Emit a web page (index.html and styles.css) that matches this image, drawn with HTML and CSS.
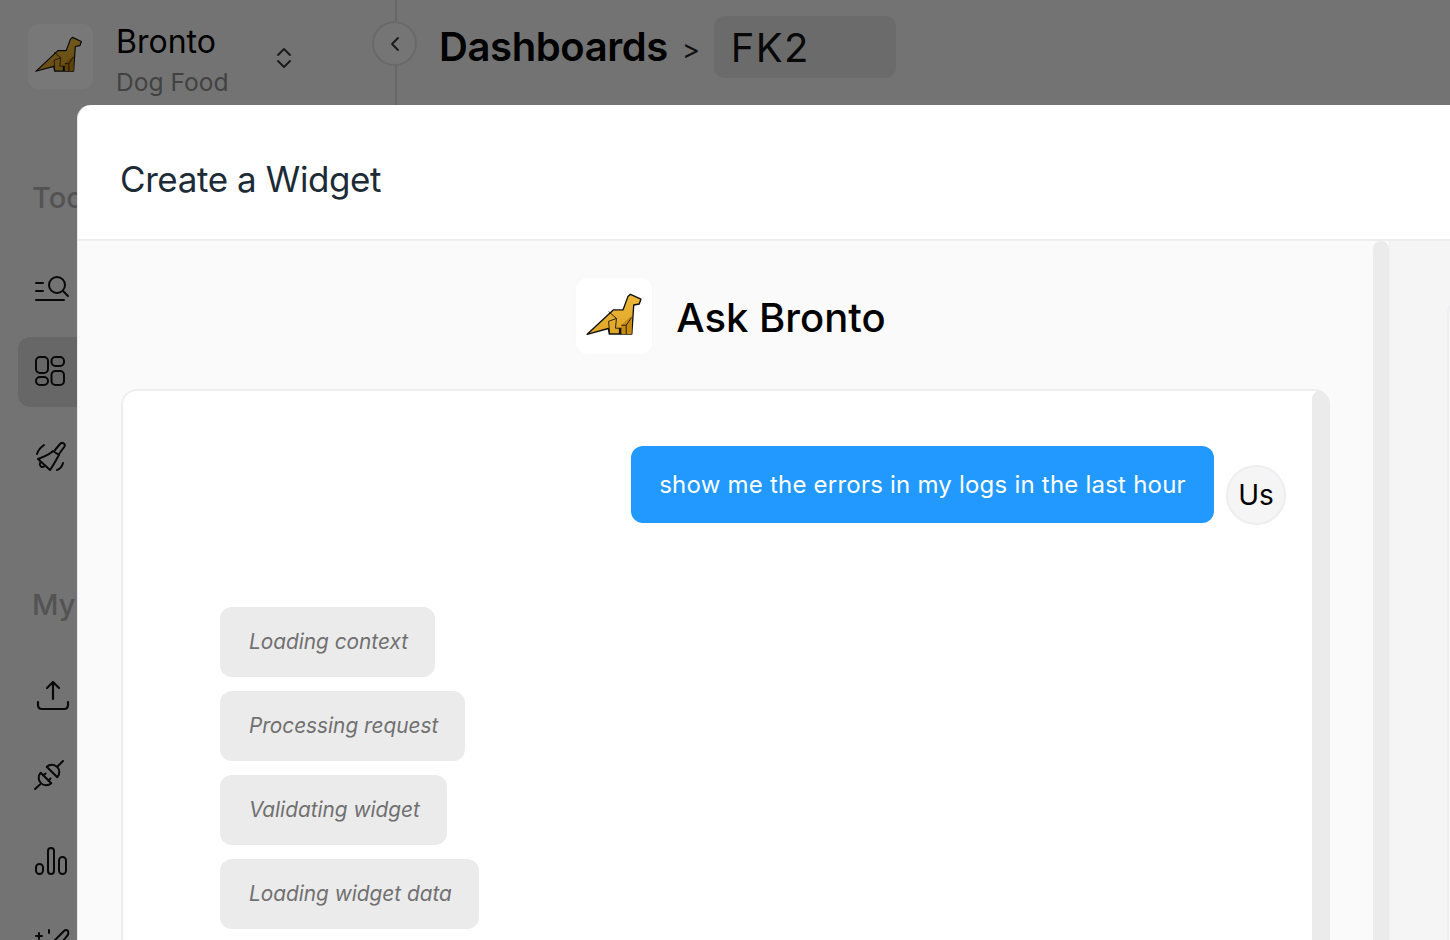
FILE: index.html
```html
<!DOCTYPE html>
<html lang="en">
<head>
<meta charset="utf-8">
<title>Create a Widget</title>
<link rel="stylesheet" href="styles.css">
</head>
<body>
<svg class="defs" width="0" height="0" aria-hidden="true">
  <defs>
    <linearGradient id="dino-fill" x1="0" y1="0" x2="0" y2="1">
      <stop offset="0" stop-color="#edb93a"/>
      <stop offset="1" stop-color="#dfa528"/>
    </linearGradient>
  </defs>
  <symbol id="dino" viewBox="24 27 58 44">
    <path fill="url(#dino-fill)" stroke="#111" stroke-width="1.400" stroke-linejoin="round" d="M25 69.300 L51.700 44.300 H61.700 L66.700 30.700 L69.300 28.300 L80 33.300 L78.300 38.300 L72.700 39.300 L70.700 69 H47.700 L46.700 63.300 Z"/>
    <path fill="#c98a10" d="M60 69 V60 L70.500 50 V69 Z"/>
    <path fill="#111" d="M57.500 63 H60 V69 H57.500 Z"/>
    <path fill="none" stroke="#111" stroke-width=".9" stroke-linejoin="round" d="M47 46 L55 53 L47 56 L48 69 M55 53 L54 63 H60 M65 60 V69 M60 60 L65 60 L70.500 52"/>
  </symbol>
</svg>
<div class="app">
  <aside class="sidebar">
    <div class="brand">
      <div class="brand-logo"><svg class="brand-dino"><use href="#dino"/></svg></div>
      <div class="brand-text">
        <div class="brand-name">Bronto</div>
        <div class="brand-sub">Dog Food</div>
      </div>
      <svg class="chevrons" viewBox="0 0 16 24" fill="none" stroke="#3a3a3a" stroke-width="2" stroke-linecap="round" stroke-linejoin="round"><path d="M2 9 L8 3 L14 9"/><path d="M2 15 L8 21 L14 15"/></svg>
    </div>
    <div class="nav-title nav-title-tools">Tools</div>
    <nav class="nav-list">
      <div class="nav-item"><svg class="icon" viewBox="0 0 34 32" fill="none" stroke="#111" stroke-width="2" stroke-linecap="round"><path d="M1 11 H8 M1 19 H8 M1 28 H29"/><circle cx="22" cy="13" r="8"/><path d="M28 19 L33 24"/></svg></div>
      <div class="nav-item nav-item-active"><svg class="icon" viewBox="0 0 34 32" fill="none" stroke="#111" stroke-width="2"><rect x="1" y="1" width="12" height="16" rx="4"/><rect x="16.500" y="1" width="12.500" height="9" rx="4"/><rect x="1" y="21" width="12" height="8" rx="4"/><rect x="16.500" y="15" width="12.500" height="14" rx="4"/></svg></div>
      <div class="nav-item"><svg class="icon" viewBox="0 0 34 32" fill="none" stroke="#111" stroke-width="2" stroke-linecap="round" stroke-linejoin="round"><path d="M20 10 L25 4 C27 1.500 31 4 29.500 6.500 L24 14"/><path d="M18 11 C14 15 8 17 3 19 L15 30 C18 26 21 20 24 15 Z"/><path d="M5 23 C4 26 7 28 9 26.500"/><path d="M2 14 C3 10 5 8 9 5 M22 30 C25 29 27 27 28 23"/></svg></div>
    </nav>
    <div class="nav-title nav-title-my">My Data</div>
    <nav class="nav-list nav-list-my">
      <div class="nav-item"><svg class="icon" viewBox="0 0 34 32" fill="none" stroke="#111" stroke-width="2.200" stroke-linecap="round" stroke-linejoin="round"><path d="M18 21 V4 M12 10 L18 4 L24 10"/><path d="M3 24 V27 Q3 31 7 31 H29 Q33 31 33 27 V24"/></svg></div>
      <div class="nav-item"><svg class="icon" viewBox="0 0 34 32" fill="none" stroke="#111" stroke-width="2" stroke-linecap="round" stroke-linejoin="round"><path d="M5.700 10.700 A7.500 7.500 0 0 0 16.300 21.300 Z"/><path d="M11.700 4.700 A7.500 7.500 0 0 1 22.300 15.300 Z"/><path d="M0 27 L5 22.500 M28 -1 L22.500 4.500 M8.500 13.500 L10.500 11.500 M13.500 18.500 L15.500 16.500"/></svg></div>
      <div class="nav-item"><svg class="icon" viewBox="0 0 34 32" fill="none" stroke="#111" stroke-width="2"><rect x="1" y="18" width="7" height="10" rx="3.500"/><rect x="13" y="2" width="6" height="26" rx="3"/><rect x="24" y="11" width="7" height="17" rx="3.500"/></svg></div>
      <div class="nav-item"><svg class="icon" viewBox="0 0 34 32" fill="none" stroke="#111" stroke-width="2" stroke-linecap="round"><path d="M19 11 L29 1 Q31 -1 33 1 Q34 4 32 6 L23 17"/><path d="M1 6 H7 M4 3 V9 M14 0 V3"/></svg></div>
    </nav>
  </aside>
  <main class="main">
    <header class="topbar">
      <h1 class="crumb">Dashboards</h1>
      <span class="crumb-sep">&gt;</span>
      <div class="crumb-name">FK2</div>
    </header>
  </main>
</div>
<div class="collapse-btn"><svg viewBox="0 0 12 16" fill="none" stroke="#333" stroke-width="1.800" stroke-linecap="round" stroke-linejoin="round"><path d="M9 2 L3 8 L9 14"/></svg></div>
<div class="backdrop"></div>
<section class="modal">
  <header class="modal-head"><h2 class="modal-title">Create a Widget</h2></header>
  <div class="modal-body">
    <div class="left-panel">
      <div class="left-content">
        <div class="ask-head">
          <div class="ask-logo"><svg class="ask-dino"><use href="#dino"/></svg></div>
          <div class="ask-title">Ask Bronto</div>
        </div>
        <div class="chat-card">
          <div class="messages">
            <div class="user-row">
              <div class="bubble">show me the errors in my logs in the last hour</div>
              <div class="avatar">Us</div>
            </div>
            <div class="chips">
              <div class="chip">Loading context</div>
              <div class="chip">Processing request</div>
              <div class="chip">Validating widget</div>
              <div class="chip">Loading widget data</div>
            </div>
          </div>
          <div class="track track-chat"></div>
        </div>
      </div>
      <div class="track track-panel"></div>
    </div>
    <div class="right-panel"><div class="preview-card"></div></div>
  </div>
</section>
</body>
</html>
```
FILE: styles.css
```css
* { box-sizing: border-box; }
html, body { margin: 0; height: 100%; overflow: hidden; }
body { font-family: Inter, "Liberation Sans", sans-serif; background: #f5f5f5; color: #000; }
.defs { position: absolute; }

.app { display: flex; height: 940px; }
.sidebar { width: 397px; flex: none; border-right: 2px solid #d9d9d9; padding: 24px 0 0 18px; }
.brand { display: flex; align-items: flex-start; margin-left: 10px; height: 81px; }
.brand-logo { width: 65px; height: 65px; background: #fff; border-radius: 10px; display: flex; align-items: center; justify-content: center; }
.brand-dino { width: 48px; height: 37px; margin: -4px 4px 0 0; }
.brand-text { margin-left: 23px; width: 150px; }
.brand-name { font-size: 32px; line-height: 34px; margin-top: 1px; }
.brand-sub { font-size: 24.600px; line-height: 30px; color: #8c8c8c; margin-top: 8px; }
.chevrons { width: 16px; height: 24px; margin: 22px 0 0 10px; }

.nav-title { font-size: 29px; font-weight: 500; color: #b0b0b0; line-height: 36px; margin-left: 14px; }
.nav-title-tools { margin-top: 75px; }
.nav-title-my { margin-top: 96px; }
.nav-list { display: flex; flex-direction: column; gap: 14px; margin-top: 37px; }
.nav-list-my { margin-top: 36px; }
.nav-item { height: 70px; padding-left: 17px; border-radius: 12px; display: flex; align-items: center; }
.nav-item-active { background: #dcdcdc; }
.icon { width: 34px; height: 32px; overflow: visible; }

.main { flex: 1; min-width: 0; }
.topbar { display: flex; align-items: center; height: 94px; padding-left: 42px; }
.crumb { font-size: 40px; font-weight: 600; margin: 0; line-height: 48px; letter-spacing: -.4px; }
.crumb-sep { font-size: 27px; margin: 4px 14px 0 14px; color: #222; }
.crumb-name { width: 182px; height: 62px; background: #e4e4e4; border-radius: 10px; font-size: 40px; line-height: 64px; padding-left: 17px; color: #111; letter-spacing: 1.300px; }

.collapse-btn { position: absolute; left: 372px; top: 21px; width: 45px; height: 45px; border-radius: 50%; background: #f8f8f8; border: 2px solid #e0e0e0; display: flex; align-items: center; justify-content: center; }
.collapse-btn svg { width: 12px; height: 16px; }

.backdrop { position: fixed; inset: 0; background: rgba(0,0,0,.53); }

.modal { position: fixed; left: 77px; top: 105px; right: -20px; bottom: -40px; background: #fff; border-radius: 14px 0 0 0; border-left: 1px solid #e8e8ec; display: flex; flex-direction: column; overflow: hidden; }
.modal-head { height: 136px; flex: none; border-bottom: 2px solid #eeeef1; display: flex; align-items: center; padding-left: 42px; }
.modal-title { margin: 0; font-size: 35px; font-weight: 400; color: #1c2b36; letter-spacing: -.4px; position: relative; top: 7px; }
.modal-body { flex: 1; display: flex; min-height: 0; }

.left-panel { width: 1312px; flex: none; display: flex; background: #fafafa; border-right: 1px solid #f0f0f2; }
.left-content { flex: 1; min-width: 0; padding: 37px 43px 0 43px; }
.ask-head { display: flex; align-items: center; justify-content: center; gap: 24px; padding-left: 11px; height: 76px; }
.ask-logo { width: 76px; height: 76px; background: #fff; border-radius: 10px; display: flex; align-items: center; justify-content: center; box-shadow: 0 0 2px rgba(0,0,0,.03); }
.ask-dino { width: 57px; height: 43px; margin-top: -3px; }
.ask-title { font-size: 40px; font-weight: 500; line-height: 48px; padding-top: 4px; }

.chat-card { margin-top: 35px; height: 700px; background: #fff; box-shadow: inset 0 0 0 2px #eeeef1; border-radius: 16px; display: flex; overflow: hidden; }
.messages { flex: 1; min-width: 0; padding: 57px 26px 0 99px; }
.user-row { display: flex; justify-content: flex-end; gap: 12px; }
.bubble { width: 583px; height: 77px; background: #2299ff; color: #fff; border-radius: 12px; font-size: 24px; letter-spacing: .22px; line-height: 77px; text-align: center; white-space: nowrap; }
.avatar { width: 60px; height: 60px; margin-top: 19px; border-radius: 50%; background: #f5f5f5; border: 2px solid #eeeef1; display: flex; align-items: center; justify-content: center; font-size: 28px; }
.chips { display: flex; flex-direction: column; align-items: flex-start; gap: 14px; margin-top: 82px; }
.chip { height: 70px; padding: 0 27px 0 29px; background: #ebebeb; border-radius: 12px; font-size: 20.800px; font-style: italic; line-height: 70px; color: #707070; white-space: nowrap; }

.track { background: #ebebeb; border-radius: 10px 10px 0 0; flex: none; }
.track-chat { width: 18px; margin-top: 1px; }
.track-panel { width: 16px; }

.right-panel { flex: 1; background: #f5f5f5; padding: 60px 0 0 57px; }
.preview-card { height: 700px; background: #fafafa; border: 2px solid #eeeef1; border-radius: 12px 0 0 0; }
```
